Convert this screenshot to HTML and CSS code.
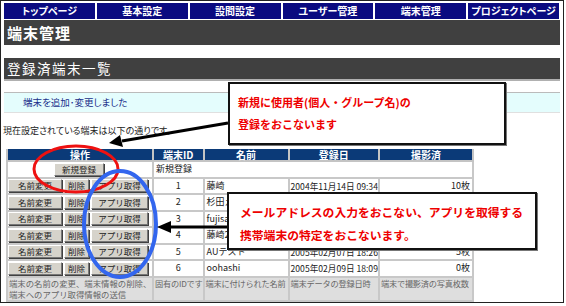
FILE: index.html
```html
<!doctype html>
<html lang="ja">
<head>
    <meta charset="utf-8">
    <title>端末管理</title>
    <link rel="stylesheet" href="styles.css">
</head>
<body>
<div class="page">
    <div class="nav">
        <a class="nav-tab">トップページ</a>
        <a class="nav-tab">基本設定</a>
        <a class="nav-tab">設問設定</a>
        <a class="nav-tab">ユーザー管理</a>
        <a class="nav-tab">端末管理</a>
        <a class="nav-tab">プロジェクトページ</a>
    </div>
    <h1 class="title">端末管理</h1>
    <h2 class="subtitle">登録済端末一覧</h2>
    <div class="notice">端末を追加･変更しました</div>
    <p class="lead">現在設定されている端末は以下の通りです。</p>

    <table class="devices">
        <tr>
            <th class="col-op">操作</th>
            <th class="col-id">端末ID</th>
            <th class="col-name">名前</th>
            <th class="col-date">登録日</th>
            <th class="col-count">撮影済</th>
        </tr>
        <tr>
            <td class="op op-new"><button class="btn btn-new">新規登録</button></td>
            <td colspan="4" class="txt">新規登録</td>
        </tr>
        <tr>
            <td class="op"><button class="btn btn-rename">名前変更</button><button class="btn btn-del">削除</button><button class="btn btn-app">アプリ取得</button></td>
            <td class="num">1</td><td class="txt">藤崎</td><td class="txt date">2004年11月14日 09:34</td><td class="cnt">10枚</td>
        </tr>
        <tr>
            <td class="op"><button class="btn btn-rename">名前変更</button><button class="btn btn-del">削除</button><button class="btn btn-app">アプリ取得</button></td>
            <td class="num">2</td><td class="txt">杉田え</td><td class="txt date"></td><td class="cnt"></td>
        </tr>
        <tr>
            <td class="op"><button class="btn btn-rename">名前変更</button><button class="btn btn-del">削除</button><button class="btn btn-app">アプリ取得</button></td>
            <td class="num">3</td><td class="txt">fujisak</td><td class="txt date"></td><td class="cnt"></td>
        </tr>
        <tr>
            <td class="op"><button class="btn btn-rename">名前変更</button><button class="btn btn-del">削除</button><button class="btn btn-app">アプリ取得</button></td>
            <td class="num">4</td><td class="txt">藤崎2</td><td class="txt date"></td><td class="cnt"></td>
        </tr>
        <tr>
            <td class="op"><button class="btn btn-rename">名前変更</button><button class="btn btn-del">削除</button><button class="btn btn-app">アプリ取得</button></td>
            <td class="num">5</td><td class="txt">AUテスト</td><td class="txt date">2005年02月07日 18:26</td><td class="cnt">5枚</td>
        </tr>
        <tr>
            <td class="op"><button class="btn btn-rename">名前変更</button><button class="btn btn-del">削除</button><button class="btn btn-app">アプリ取得</button></td>
            <td class="num">6</td><td class="txt">oohashi</td><td class="txt date">2005年02月09日 18:09</td><td class="cnt">0枚</td>
        </tr>
        <tr class="help">
            <td class="help-op">端末の名前の変更、端末情報の削除、端末へのアプリ取得情報の送信</td>
            <td>固有のIDです</td>
            <td>端末に付けられた名前</td>
            <td>端末データの登録日時</td>
            <td>端末で撮影済の写真枚数</td>
        </tr>
    </table>

    <!-- annotations drawn over the screenshot -->
    <svg class="marks" width="564" height="304" viewBox="0 0 564 304">
        <ellipse cx="76" cy="169" rx="42" ry="23" fill="none" stroke="#ee1111" stroke-width="3"/>
        <ellipse cx="120" cy="224" rx="36" ry="53" fill="none" stroke="#3366ee" stroke-width="4"/>
        <line x1="228" y1="123" x2="122" y2="141" stroke="#000" stroke-width="3"/>
        <polygon points="109,143 120,135 123,147" fill="#000"/>
        <line x1="227" y1="227" x2="170" y2="227" stroke="#000" stroke-width="3"/>
        <polygon points="157,227 171,221 171,233" fill="#000"/>
    </svg>
    <div class="callout callout-new">
        <p>新規に使用者(個人・グループ名)の</p>
        <p>登録をおこないます</p>
    </div>
    <div class="callout callout-app">
        <p>メールアドレスの入力をおこない、アプリを取得する</p>
        <p>携帯端末の特定をおこないます。</p>
    </div>
</div>
</body>
</html>
```

FILE: styles.css
```css
body {
    margin: 0;
    font-family: "Noto Sans CJK JP", "Liberation Sans", sans-serif;
    color: #222;
    background: #fff;
}

.page {
    position: relative;
    width: 556px;
    height: 296px;
    padding: 2px 3px 3px 3px;
    border: 1px solid #222;
    overflow: hidden;
}

/* top navigation */
.nav {
    display: grid;
    grid-template-columns: repeat(6, 1fr);
    gap: 2px;
    width: 555px;
}

.nav-tab {
    background: #0a0a80;
    color: #fff;
    font-size: 10px;
    font-weight: bold;
    line-height: 16px;
    text-align: center;
    font-feature-settings: "palt";
}

.title {
    margin: 1px 0 0 0;
    height: 25px;
    background: #404040;
    color: #fff;
    font-size: 15px;
    font-weight: bold;
    line-height: 25px;
    padding-left: 3px;
    letter-spacing: 1px;
}

.subtitle {
    margin: 13px 0 0 0;
    height: 21px;
    background: #404040;
    border-bottom: 2px solid #b0b0b0;
    color: #fff;
    font-size: 13.5px;
    font-weight: normal;
    line-height: 21px;
    padding-left: 3px;
    letter-spacing: 1.5px;
}

.notice {
    margin-top: 11px;
    height: 19px;
    background: #e4fdfd;
    border-top: 1px solid #bbb;
    border-bottom: 1px solid #e0e0e0;
    color: #1a2f8a;
    font-size: 9.5px;
    line-height: 19px;
    padding-left: 19px;
    font-feature-settings: "palt";
}

.lead {
    margin: 11px 0 0 -1px;
    font-size: 9px;
    line-height: 13px;
    font-feature-settings: "palt";
}

/* device table */
.devices {
    margin: 12px 0 0 2px;
    border-collapse: collapse;
    table-layout: fixed;
    font-size: 9px;
}

.devices th {
    background: #0b3a78;
    color: #fff;
    font-size: 10px;
    font-weight: bold;
    height: 11px;
    line-height: 11px;
    padding: 0;
    border: 2px solid #c4c4c4;
    border-top: none;
}

.col-op { width: 144px; }
.col-id { width: 48px; }
.col-name { width: 83px; }
.col-date { width: 88px; }
.col-count { width: 92px; }

.devices td {
    height: 14.5px;
    padding: 0;
    border: 2px solid #c8c8c8;
    line-height: 12px;
    white-space: nowrap;
    overflow: hidden;
}

.devices .op {
    padding: 0;
    font-size: 0;
}

.devices .op-new {
    text-align: center;
}

.devices .num { text-align: center; }
.devices .txt { padding-left: 2px; }
.devices .date { font-size: 8.6px; padding-left: 1px; }
.devices .cnt { text-align: right; padding-right: 2px; }

.btn {
    height: 13px;
    padding: 0;
    margin-right: 2px;
    background: #d6d3cb;
    border: 1px solid;
    border-color: #fff #777 #777 #fff;
    box-shadow: 1px 1px 0 #404040;
    font-family: inherit;
    font-size: 8.5px;
    line-height: 11px;
    color: #222;
    vertical-align: middle;
}

.btn-rename { width: 54px; }
.btn-del { width: 25px; }
.btn-app { width: 57px; margin-right: 0; }
.btn-new { width: 50px; }

.help td {
    background: #dedede;
    color: #666;
    font-size: 8.2px;
    line-height: 11px;
    height: 22px;
    vertical-align: top;
    padding-left: 1px;
    letter-spacing: -0.2px;
}

.devices .help-op {
    white-space: normal;
    letter-spacing: 0;
    font-size: 8.4px;
}

/* annotations */
.marks {
    position: absolute;
    left: -1px;
    top: -1px;
}

.callout {
    position: absolute;
    box-sizing: border-box;
    background: #fff;
    border: 2px solid #111;
    box-shadow: 1px 1px 0 #777;
    color: #ee0000;
    font-weight: bold;
}

.callout p {
    margin: 0;
    white-space: nowrap;
}

.callout-new {
    left: 227px;
    top: 81px;
    width: 278px;
    height: 63px;
    padding: 7px 0 0 8px;
    font-size: 11px;
    line-height: 22px;
}

.callout-app {
    left: 226px;
    top: 191px;
    width: 310px;
    height: 58px;
    padding: 6px 0 0 11px;
    font-size: 11.8px;
    line-height: 23px;
}
```
